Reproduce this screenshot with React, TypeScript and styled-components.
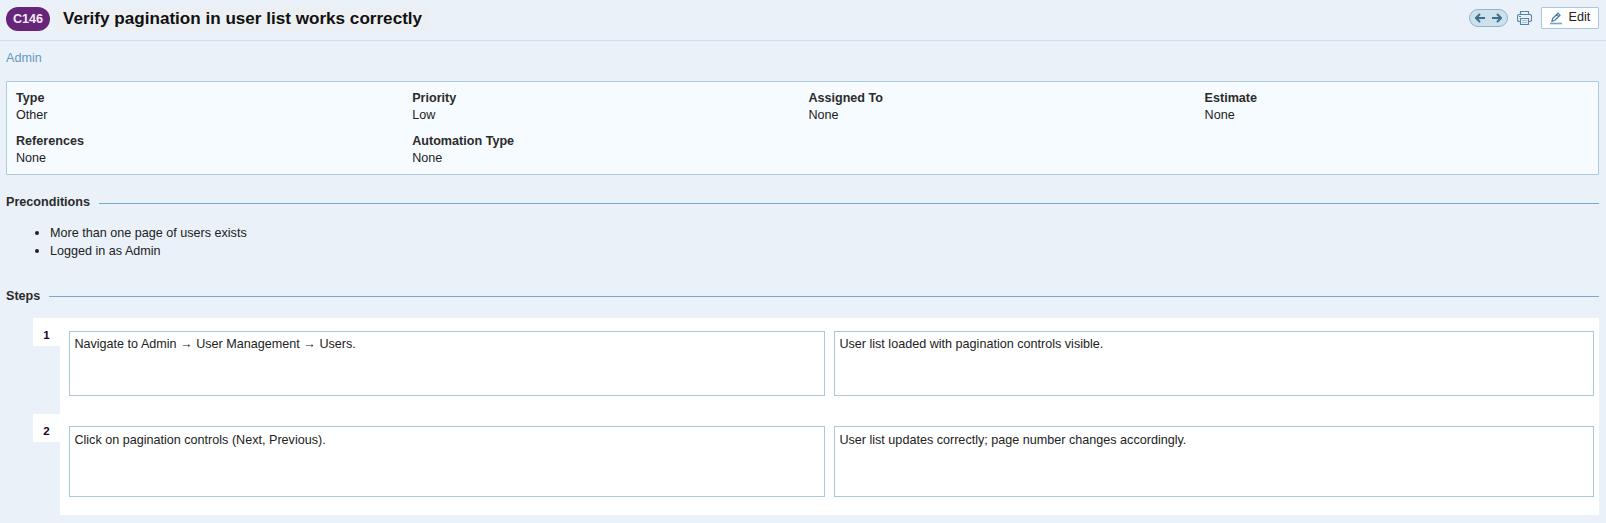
import React from "react";
import styled, { createGlobalStyle } from "styled-components";

const GlobalStyle = createGlobalStyle`
  * { box-sizing: border-box; }
  body {
    margin: 0;
    background: #eaf1f8;
    color: #222;
    font: 12.6px/18px "Liberation Sans", Arial, sans-serif;
  }
`;

const Page = styled.div`
  height: 523px;
  overflow: hidden;
`;

const Header = styled.header`
  display: flex;
  align-items: flex-start;
  height: 41px;
  padding: 7px 7px 0 6px;
  border-bottom: 1px solid #cde0ea;
`;

const CaseId = styled.span`
  width: 44px;
  height: 24px;
  border-radius: 12px;
  background: #662579;
  color: #f3eaf5;
  font-size: 12.6px;
  font-weight: bold;
  line-height: 24px;
  text-align: center;
`;

const Title = styled.h1`
  margin: 0 0 0 6px;
  padding: 0 7px;
  height: 24px;
  background: #ecf0f3;
  color: #111;
  font-size: 17.1px;
  line-height: 23px;
`;

const Actions = styled.div`
  display: flex;
  margin-left: auto;
`;

const Pager = styled.div`
  display: flex;
  align-items: center;
  justify-content: center;
  gap: 7px;
  width: 39px;
  height: 18px;
  margin: 2px 9px 0 0;
  border: 1px solid #8bb5d2;
  border-radius: 9px;
  background: #cfe0eb;
`;

const PrintIcon = styled.svg`
  margin: 4px 9px 0 0;
`;

const EditButton = styled.button`
  display: flex;
  align-items: center;
  width: 58px;
  height: 22px;
  padding: 0 0 3px 8px;
  border: 1px solid #a9c8de;
  border-radius: 1px;
  background: #fff;
  color: #222;
  font: 12.6px "Liberation Sans", Arial, sans-serif;

  svg { margin: 4px 6.5px 0 0; }
`;

const Breadcrumb = styled.a`
  display: block;
  height: 40px;
  padding: 8px 0 0 6px;
  color: #6499c1;
`;

const Info = styled.dl`
  display: grid;
  grid-template-columns: repeat(4, 396.2px);
  row-gap: 9px;
  height: 94px;
  margin: 0 7px 0 6px;
  padding: 8px 0 0 9px;
  overflow: hidden;
  border: 1px solid #aecbde;
  border-radius: 1px;
  background: #f6fbff;
  line-height: 17px;
  align-content: start;

  dt { font-weight: bold; color: #2b2b2b; }
  dd { margin: 0; }
`;

const SectionTitle = styled.h2<{ $top: number; $rule: number }>`
  display: flex;
  align-items: center;
  gap: 9px;
  margin: ${(p) => p.$top}px 7px 0 6px;
  color: #2b2b2b;
  font-size: 12.6px;
  line-height: 18px;

  &::after {
    content: "";
    flex: 1;
    height: 1px;
    margin-top: ${(p) => p.$rule}px;
    background: #78aaca;
  }
`;

const Conditions = styled.ul`
  margin: 13px 0 0;
  padding: 0 0 0 50px;

  li::marker { font-size: 13px; }
`;

const Steps = styled.div`
  margin: 13px 7px 0 33px;
`;

const Step = styled.div<{ $height: number }>`
  display: flex;
  height: ${(p) => p.$height}px;
`;

const StepNumber = styled.div`
  width: 27px;
  height: 28px;
  background: #fff;
  color: #1c0423;
  font-size: 11.5px;
  font-weight: bold;
  line-height: 35px;
  text-align: center;
`;

const StepBody = styled.div<{ $top: number }>`
  display: flex;
  flex: 1;
  gap: 9px;
  padding: ${(p) => p.$top}px 5px 18px 9px;
  background: #fff;
`;

const StepBox = styled.div<{ $width: number; $pad: number }>`
  width: ${(p) => p.$width}px;
  padding: ${(p) => p.$pad}px 4.4px 0;
  border: 1px solid #abc9dd;
`;

const fields = [
  ["Type", "Other"],
  ["Priority", "Low"],
  ["Assigned To", "None"],
  ["Estimate", "None"],
  ["References", "None"],
  ["Automation Type", "None"],
];

const steps = [
  {
    action: "Navigate to Admin → User Management → Users.",
    expected: "User list loaded with pagination controls visible.",
    height: 96,
    top: 13,
    pad: 3,
  },
  {
    action: "Click on pagination controls (Next, Previous).",
    expected: "User list updates correctly; page number changes accordingly.",
    height: 101,
    top: 12,
    pad: 4,
  },
];

const Arrow = ({ right = false }: { right?: boolean }) => (
  <svg width="10" height="10" viewBox="0 0 10 10" fill="none" stroke="#3a6d92" strokeWidth="2">
    <path d={right ? "M0 5H9M5 1L9 5L5 9" : "M10 5H1M5 1L1 5L5 9"} />
  </svg>
);

export default function App() {
  return (
    <Page>
      <GlobalStyle />
      <Header>
        <CaseId>C146</CaseId>
        <Title>Verify pagination in user list works correctly</Title>
        <Actions>
          <Pager>
            <Arrow />
            <Arrow right />
          </Pager>
          <PrintIcon width="15" height="14" viewBox="0 0 15 14" fill="none" stroke="#5585a8">
            <path d="M3.5 3.5V.5H11.5V3.5M3.5 10.5H1.5L.5 9.5V4.5L1.5 3.5H13.5L14.5 4.5V9.5L13.5 10.5H11.5M3.5 7.5H11.5V13.5H3.5Z" strokeWidth="1.15" />
            <path d="M5 9.5H10M5 11.5H10" stroke="#a5c4da" />
            <path d="M2 5.5H4" stroke="#29a47b" />
          </PrintIcon>
          <EditButton>
            <svg width="12" height="13" viewBox="0 0 12 13" fill="none" stroke="#41769c" strokeWidth="1.2">
              <path d="M2 9.2L2.6 6.5L8 1.2L10 3.2L4.6 8.5ZM6.5 2.7L8.5 4.7" />
              <path d="M0 11.5H12" stroke="#78a5c5" strokeWidth="1.6" />
            </svg>
            Edit
          </EditButton>
        </Actions>
      </Header>
      <Breadcrumb>Admin</Breadcrumb>
      <Info>
        {fields.map(([label, value]) => (
          <div key={label}>
            <dt>{label}</dt>
            <dd>{value}</dd>
          </div>
        ))}
      </Info>
      <SectionTitle $top={18} $rule={2}>Preconditions</SectionTitle>
      <Conditions>
        <li>More than one page of users exists</li>
        <li>Logged in as Admin</li>
      </Conditions>
      <SectionTitle $top={27} $rule={0}>Steps</SectionTitle>
      <Steps>
        {steps.map((step, i) => (
          <Step key={i} $height={step.height}>
            <StepNumber>{i + 1}</StepNumber>
            <StepBody $top={step.top}>
              <StepBox $width={756} $pad={step.pad}>{step.action}</StepBox>
              <StepBox $width={760} $pad={step.pad}>{step.expected}</StepBox>
            </StepBody>
          </Step>
        ))}
      </Steps>
    </Page>
  );
}
